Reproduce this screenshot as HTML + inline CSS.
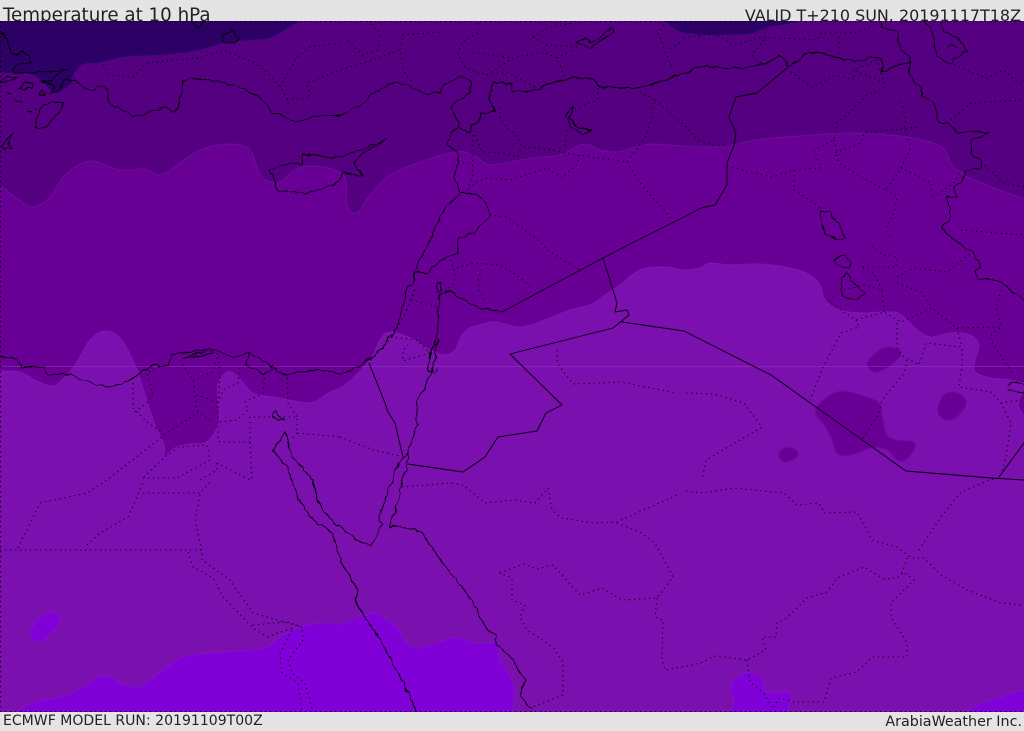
<!DOCTYPE html>
<html><head><meta charset="utf-8"><style>
html,body{margin:0;padding:0;background:#e4e4e4}
body{position:relative;width:1024px;height:729px;overflow:hidden;font-family:"DejaVu Sans",sans-serif;color:#222}
div{position:absolute;white-space:nowrap}
svg{position:absolute;left:0;top:21px}
</style></head><body>
<div style="left:3px;top:5px;font-size:18.26px;line-height:22px">Temperature at 10 hPa</div>
<div style="right:3px;top:5px;font-size:15.95px;line-height:22px">VALID T+210 SUN. 20191117T18Z</div>
<div style="left:3px;top:713px;font-size:14.05px;line-height:17px">ECMWF MODEL RUN: 20191109T00Z</div>
<div style="right:2px;top:714px;font-size:14.3px;line-height:17px">ArabiaWeather Inc.</div>
<svg width="1024" height="691" viewBox="0 21 1024 691">
<defs><filter id="w" filterUnits="userSpaceOnUse" x="0" y="21" width="1024" height="691"><feTurbulence type="fractalNoise" baseFrequency=".13" numOctaves="2" seed="4" result="n"/><feDisplacementMap in="SourceGraphic" in2="n" scale="5" xChannelSelector="R" yChannelSelector="G"/></filter></defs>
<rect x="0" y="21" width="1024" height="691" fill="#7a10ae"/>
<g stroke-width="1" stroke-linejoin="round">
<path class="s" fill="#680096" stroke="#8216ae" d="M-30 -30 -30 371 0 371 20 372 35 380 50 386 60 382 75 365 90 340 105 331 120 338 135 365 145 395 155 425 164 445 165 456 175 448 190 444 205 443 215 432 219 420 218 400 218 385 225 373 235 374 245 385 255 394 280 398 310 403 330 392 345 385 370 360 380 340 390 332 410 338 430 350 445 355 455 350 462 335 470 328 480 325 495 322 520 327 545 320 570 310 590 305 605 295 620 285 640 270 665 267 684 270 700 268 710 263 730 265 760 264 790 268 810 275 820 285 825 300 840 310 860 313 885 312 900 314 915 328 930 337 950 333 970 335 979 345 975 360 975 372 990 378 1010 380 1030 385 1032 393 1024 393 1019 400 1020 410 1032 420 1060 420 1060 -30Z"/>
<path class="s" fill="#540080" stroke="#680f96" d="M-30 -30 -30 187 0 187 15 197 33 207 50 197 65 175 90 161 120 170 145 169 163 174 200 150 232 144 250 150 258 170 265 180 280 182 295 170 312 166 335 170 346 180 347 205 357 213 370 195 390 175 420 162 450 153 465 152 478 158 490 165 520 160 540 157 560 155 583 144 600 150 617 152 633 148 653 144 684 146 720 147 745 142 770 138 800 136 850 133 900 136 930 142 945 150 952 165 970 178 1000 190 1030 200 1060 200 1060 -30Z"/>
<path class="s" fill="#2d0066" stroke="#400a78" d="M-30 -10 -30 73 0 73 30 74 40 80 50 90 55 94 70 85 75 72 85 64 100 63 125 57 165 55 200 50 225 43 255 40 270 38 290 27 305 15 310 -10Z"/>
<path class="s" fill="#2d0066" stroke="#400a78" d="M655 10 665 21 680 32 705 35 725 35 750 34 770 27 800 21 815 5 700 -10Z"/>
<g fill="#680096" stroke="#75089f">
<path class="s" d="M867 363 877 352 887 347 900 350 899 358 887 368 874 372Z"/>
<path class="s" d="M938 407 944 395 954 392 964 397 966 405 957 417 947 420 939 415Z"/>
<path class="s" d="M779 453 787 447 797 451 797 457 787 462 781 460Z"/>
<path class="s" d="M816 408 827 397 841 391 861 395 879 403 883 420 887 435 897 440 914 442 914 450 906 460 897 460 887 450 872 448 847 456 836 452 832 440 824 425 817 417Z"/>
</g>
<g fill="#8000d8" stroke="#8410c8">
<path class="s" d="M30 632 37 620 50 613 60 615 58 625 48 637 38 642 32 638Z"/>
<path class="s" d="M-5 722 15 712 33 703 50 699 67 695 83 687 100 676 110 677 123 684 137 687 150 680 167 667 183 657 207 653 250 650 267 647 283 635 300 627 320 623 340 624 357 618 375 613 383 617 397 628 408 645 420 648 437 643 457 637 473 643 497 644 500 660 512 680 514 697 512 712 508 730 250 735Z"/>
<path class="s" d="M732 725 734 700 730 690 734 680 746 673 759 675 764 683 766 692 789 692 791 700 787 712 780 725Z"/>
<path class="s" d="M950 722 966 712 984 703 1030 688 1060 680 1060 740Z"/>
</g>
</g>
<path d="M0 366.5H1024" stroke="#9a40c0" stroke-opacity=".45" stroke-width="1"/>
<g fill="none" stroke="#000" stroke-width=".9" stroke-linejoin="round" stroke-linecap="round">
<path d="M787 68 757 93 736 97 729 117 736 133 734 145 727 163 727 185 715 205 701 208 684 217 638 240 603 258 502 312"/>
<path d="M603 258 617 303 615 312 627 310 629 315 613 328 510 354 562 405 546 413 537 431 498 437 485 457 463 472 408 464"/>
<path d="M622 322 684 331 771 375 906 471 991 478 1024 480M999 477 1024 443"/>
<path d="M369 363 385 403 388 412 395 423 402 453 403 457"/>
</g>
<g fill="none" stroke="#000" stroke-width=".9" stroke-linejoin="round" stroke-linecap="round" filter="url(#w)">
<path d="M74 79 82 86 93 90 98 86 108 90 108 103 120 110 133 116 147 114 163 107 175 112 180 103 183 80 190 78 220 81 257 95 273 112 297 122 310 117 340 115 355 108 362 105 373 93 395 82 407 85 427 95 440 92 443 85 462 76 472 83 470 92 450 107 459 123 452 132 447 144 457 152 458 163 454 177 460 193 475 193 480 197 487 205 490 215 475 232 460 237"/>
<path d="M460 195 447 205 442 213 435 230 430 240 420 260 415 272 427 273 437 263 458 253 458 243 460 237"/>
<path d="M459 127 470 133 471 125 479 122 480 113 495 111 489 100 493 81 512 85 513 91 533 91 547 84 573 77 593 80 600 87 623 89 647 86 684 73 701 66 724 68 741 68 767 63 779 56 786 60 787 66 796 63 806 53 822 53 844 60 861 61 869 57 881 58 883 65 881 72 887 70 901 63 911 63" stroke-width="1.1"/>
<path d="M502 312 480 308 465 301 450 290 439 295 438 323 437 340 435 360 428 380 417 403 417 423 408 453 403 457 395 472 393 480 390 487 380 515 382 523 372 545"/>
<path d="M408 453 407 470 402 480 398 502 388 528"/>
<path d="M0 357 17 359 22 368 43 367 47 374 70 375 93 383 107 388 127 382 150 367 155 363 160 366 168 365 172 354 193 352 210 348 233 357 248 353 253 355 270 365 282 375 300 372 313 370 330 372 340 373 363 365 383 347 397 327 403 307 407 287 413 283 415 272"/>
<path d="M182 358 210 350 212 353 192 357ZM245 364 250 353M245 364 260 372 262 375 272 370 270 365"/>
<path d="M285 432 273 450 287 467 300 502 313 520 333 533 337 547 340 560 350 577 358 590 355 600 367 620 390 657 410 697 417 712"/>
<path d="M285 432 292 457 313 480 318 503 333 522 350 535 362 543 372 545"/>
<path d="M388 528 393 526 420 530 437 555 450 572 473 602 487 630 497 635 495 643 513 660 525 680 520 695 532 710"/>
<path d="M881 21 882 27 897 32 901 50 911 58 909 68 914 82 922 88 922 97 934 103 939 122 947 123 959 133 977 131 989 133 972 140 971 153 981 162 979 168 966 172 961 182 954 188 957 197 947 197 951 217 942 228 954 240 974 253 981 267 974 272 979 279 991 279 1004 285 1024 300"/>
<path d="M270 170 283 165 302 163 303 154 330 157 340 157 360 150 388 139 360 155 353 163 363 176 343 173 340 180 333 185 307 193 293 192 278 190 272 175Z"/>
<path d="M0 34 8 39 10 54 20 54 22 51 28 56 32 63 20 64 13 69 15 73 33 73 67 70 57 74 52 81 40 81 55 86 50 93 58 91 65 79 74 80"/>
<path d="M0 83 8 76 17 78 10 81 2 84ZM18 89 23 84 33 83 33 88 20 89ZM39 93 43 90 45 96 40 95ZM6 93 11 94 9 95ZM15 100 22 103M27 112H32M35.5 109H36.5"/>
<path d="M36 121 43 104 63 101 62 109 45 128 37 128Z"/>
<path d="M3 147 7 139 12 133 8 144 12 149 5 149Z"/>
<path d="M221 36 232 30 240 39 226 44ZM192 21 198 28 203 21"/>
<path d="M577 42 585 38 590 43 600 38 610 28 615 32 605 38 590 48Z"/>
<path d="M565 117 572 107 573 112 568 118 580 128 592 130 582 134 572 127Z"/>
<path d="M924 21 932 30 937 57 951 65 954 58 967 52 961 40 944 32 942 21"/>
<path d="M948 48 952 44 956 48"/>
<path d="M820 210 822 225 825 235 838 240 845 238 842 228 830 212Z"/>
<path d="M834 260 845 255 850 263 848 268 838 265Z"/>
<path d="M846 273 841 283 842 295 856 300 866 293 854 283 847 275"/>
<path d="M437 283 442 282 442 290 438 292Z"/>
<path d="M438 340 431 350 430 358 435 340M430 353 428 370 435 373 437 368"/>
<path d="M272 412 277 410 278 415 285 420 278 420 272 415Z"/>
<path d="M1008 385 1016 382 1024 384M1008 390 1024 393"/>
</g>
<g fill="none" stroke="#000" stroke-width="1.1" stroke-dasharray="1.2 3.8" stroke-opacity=".95">
<path d="M0 21.5H1024M0 711.5H1024M.5 21V712"/>
<path d="M103 65 110 75 133 77 147 63 173 60 200 58 223 50 253 62 270 75 280 87 288 100 288 115M280 87 297 57 310 47 340 43M287 100 310 98 307 83 340 70 373 60 400 50 403 70 413 83"/>
<path d="M400 50 403 35 440 32M367 21 380 33 378 50 363 55 347 40M478 23 478 33 462 42 458 55 465 68 487 75 513 58 543 52 557 58 565 78M473 52 513 58M507 72 537 88M487 75 507 72M533 37 547 28 573 23M533 37 547 45 577 47M557 58 573 50"/>
<path d="M667 21 658 33 673 70M680 43 668 50M684 38 714 33 734 45 761 37 817 40 821 33 854 33 877 25M839 37V57M764 40 752 55 761 63M719 21 710 28"/>
<path d="M598 88 597 100 573 110M567 130 565 147M500 107 500 120 517 137 522 147 540 148 567 153 578 155 627 162 647 135 655 100 637 90M655 100 687 128 697 140 714 145 727 145"/>
<path d="M627 162 640 183 673 220M578 155 578 163 562 178 547 168 510 180 487 178 477 182 467 190M473 135 472 147 473 175 467 190M475 135 482 152 503 153 517 157 522 147M458 163H473M490 215 507 217 538 240 550 252 580 270"/>
<path d="M457 268 473 263 500 265 517 275 532 288M478 280 483 267M478 280 480 292 487 303M450 260 455 273 453 285 439 295"/>
<path d="M407 310 415 288 412 300 437 307M407 310 397 328 392 337 417 340 430 353 403 361 403 350 408 345M392 337 373 358 369 363"/>
<path d="M727 166 771 177 794 170 821 168 814 150 834 140 837 123 854 108 867 95 886 87M794 170 794 190 814 203 822 210M834 140 839 163 861 177 886 190 901 168 911 147 904 128 919 127 864 133 861 143 834 153 839 163M901 102 906 120 904 128M901 168 931 183 932 198 954 183 961 170M886 190 897 197 894 213 886 227 891 240M951 120 971 103 1024 100M981 162 1004 183 1024 187M961 230 1024 235M954 65 987 78 1004 70 1014 80 1024 85M791 72 811 87 836 75 854 80 854 70 877 60 884 83 854 70"/>
<path d="M834 297 829 302 856 320 884 312 901 322 932 308 957 328 1001 327M856 320 859 327 841 333 824 365 810 400M884 312 882 290 864 285 844 290M882 290 874 273 861 267 896 267 897 257 884 255 876 250 870 243M897 277 914 268 947 272 971 253M897 283 921 292 932 308M897 323 897 347 901 355 919 365 926 343 962 347 962 363 959 387 991 392 1001 403 1011 423 1006 457 1002 473M1001 403 1021 400M957 328 962 347M1001 290 996 308 1001 327 989 337 1012 373M907 360 904 373 882 400 879 413 862 440"/>
<path d="M686 393 714 394 744 403 762 427 706 460 702 480M557 350V363L573 384 620 382 677 393"/>
<path d="M402 487 450 483 463 485 485 503 513 500 535 503 548 488 552 510 562 518 593 523 617 522 677 495M617 523 640 532 655 543 673 577 657 598 622 600 602 588 580 595 553 565 537 569 523 564 500 573 512 578 512 600 525 605 520 617 527 630 553 647 563 662 563 695 533 707M657 598 655 617 663 620 662 660 665 670 687 666 701 663 714 656 747 660 766 650 762 637 776 637 777 623 787 618 807 598 827 592 837 578 864 567 884 579 897 578 904 572 914 580 891 603 891 617 907 643 907 657 872 657 857 672 831 678 824 702 794 702 779 698 772 710M747 660 750 682 764 693 771 707"/>
<path d="M686 491 704 493 734 488 784 493 797 505 819 503 824 513 857 512 872 540 897 547 911 558 924 558 941 575 967 590 1001 603 1021 605M907 558 902 573M919 550 941 517 961 492 989 480 1000 478"/>
<path d="M0 550H202M18 548 40 503 87 493 107 480 167 433 198 412M87 545 100 533 128 517 143 483M143 493H200L212 480M200 495 195 520 202 552 202 560 230 580 253 613 302 627 303 640 288 660 292 673 305 683 313 712M188 552 193 567 213 578 223 597 253 628 267 637 293 628 280 653 282 673 298 683 302 712M253 625 287 622 302 627"/>
<path d="M143 478H177L210 460 207 445 180 447 167 455 143 478M217 463V470L200 480M217 463 250 480M133 378V408L147 422 163 433M135 412 148 402 153 393 147 373 160 366M180 360 193 380 197 410 198 412 213 422M197 395 217 402M193 380 213 372 218 353 220 373 218 403V440L220 442H250V417H297V433L340 437M297 433 290 440M220 422 237 420 248 410 245 402 263 393 265 373M218 403 223 390 238 383 240 367M250 442 252 480M272 365 287 377 288 403 297 417M340 437 373 450 400 456"/>
</g>
</svg>
<script>
document.querySelectorAll('path.s').forEach(function(e){
var n=e.getAttribute('d').match(/-?\d+(\.\d+)?/g).map(Number),p=[],i;
for(i=0;i<n.length;i+=2)p.push([n[i],n[i+1]]);
var L=p.length,d='M'+p[0][0]+' '+p[0][1];
for(i=0;i<L;i++){
var a=p[(i-1+L)%L],b=p[i],c=p[(i+1)%L],f=p[(i+2)%L];
d+='C'+(b[0]+(c[0]-a[0])/6).toFixed(1)+' '+(b[1]+(c[1]-a[1])/6).toFixed(1)+' '+(c[0]-(f[0]-b[0])/6).toFixed(1)+' '+(c[1]-(f[1]-b[1])/6).toFixed(1)+' '+c[0]+' '+c[1];
}
e.setAttribute('d',d+'Z');
});
</script>
</body></html>
